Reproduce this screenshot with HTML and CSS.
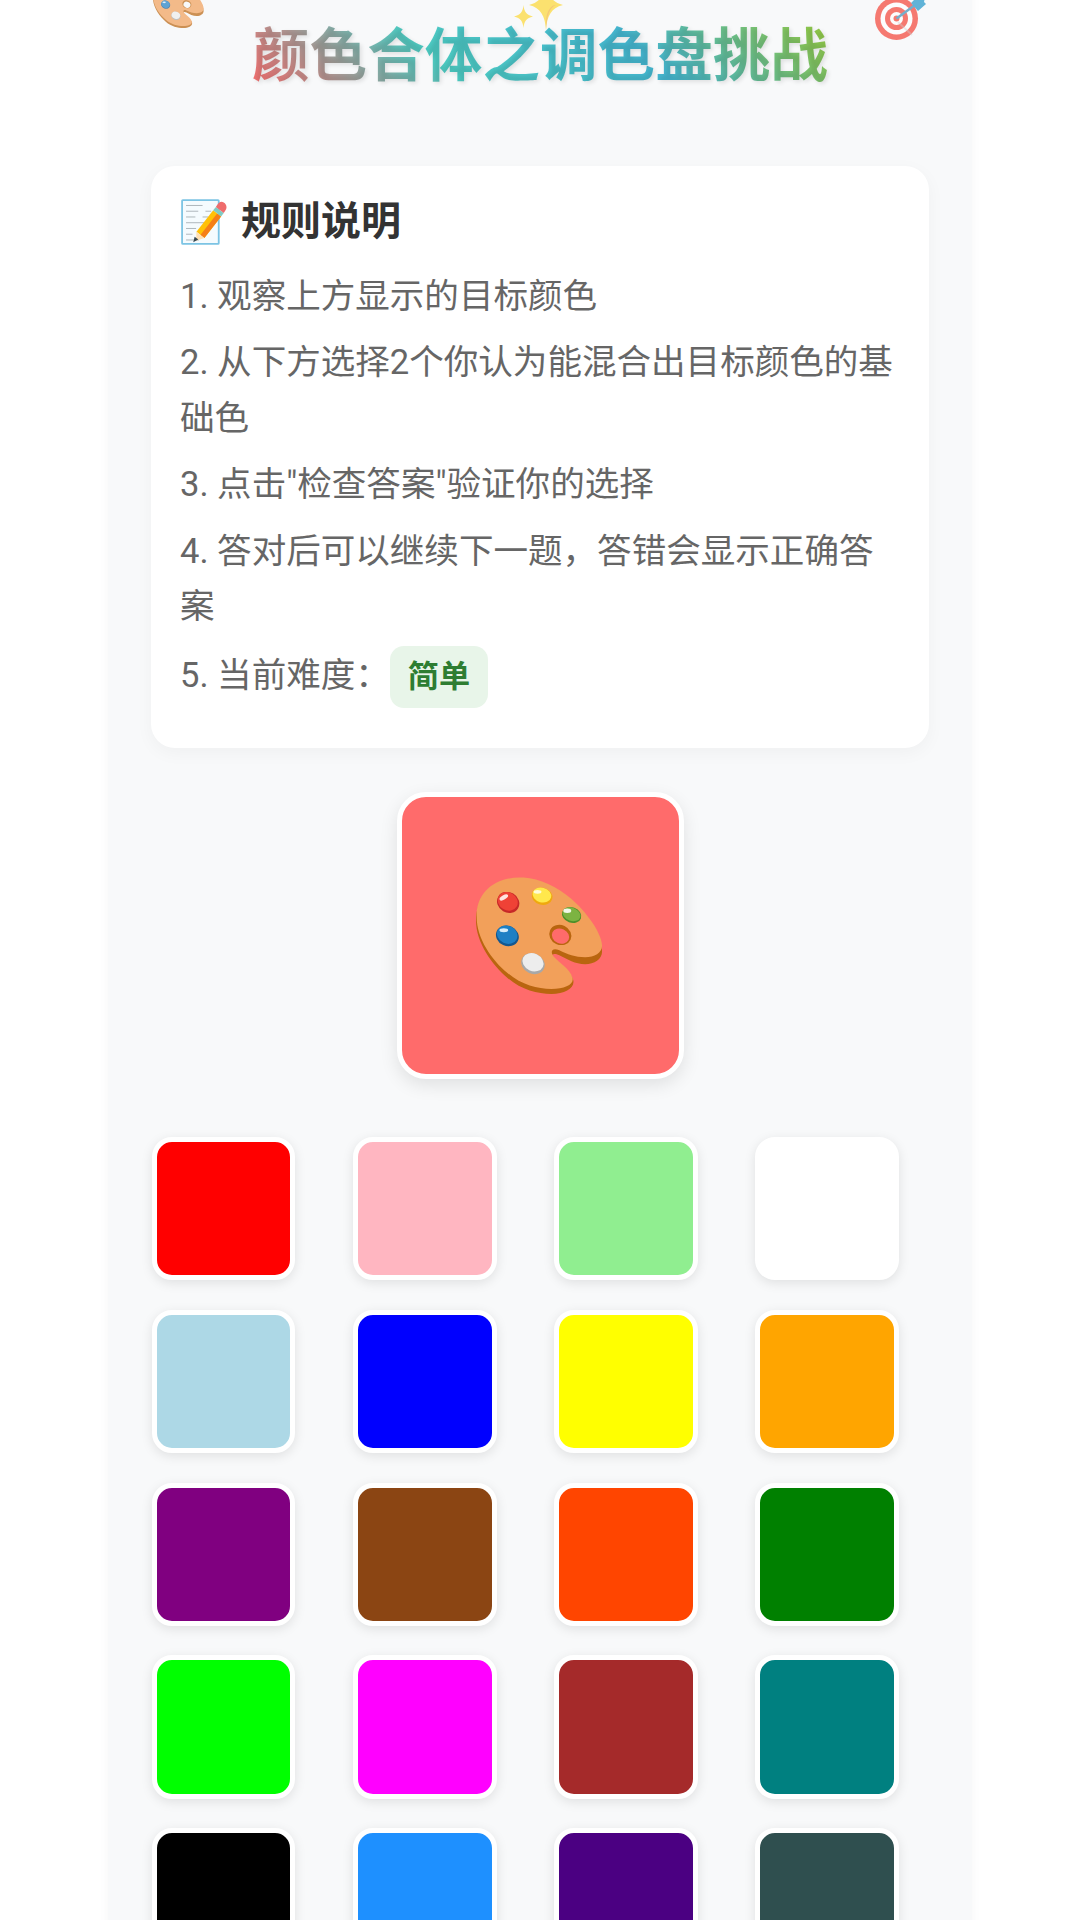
FILE: index.html
```html
<!DOCTYPE html>
<html lang="zh-CN">
<head>
<meta charset="utf-8">
<title>颜色合体之调色盘挑战</title>
<link rel="stylesheet" href="styles.css">
</head>
<body>
<main class="panel">
  <header class="hero">
    <h1 class="title">颜色合体之调色盘挑战</h1>
    <svg class="deco deco-palette" viewBox="0 0 64 59"><use href="#palette"/></svg>
    <svg class="deco deco-sparkle" viewBox="0 0 56 56"><use href="#sparkle"/></svg>
    <svg class="deco deco-target" viewBox="0 0 56 56"><use href="#target"/></svg>
  </header>

  <section class="rules">
    <h2 class="rules-title"><svg class="memo" viewBox="0 0 64 64"><use href="#memo"/></svg>规则说明</h2>
    <p class="rule">1. 观察上方显示的目标颜色</p>
    <p class="rule">2. 从下方选择2个你认为能混合出目标颜色的基础色</p>
    <p class="rule">3. 点击"检查答案"验证你的选择</p>
    <p class="rule">4. 答对后可以继续下一题，答错会显示正确答案</p>
    <p class="rule">5. 当前难度：<span class="badge">简单</span></p>
  </section>

  <div class="target-box"><svg class="target-icon" viewBox="0 0 64 59"><use href="#palette"/></svg></div>

  <div class="swatches">
    <div class="swatch c-red"></div><div class="swatch c-pink"></div><div class="swatch c-lgreen"></div><div class="swatch c-white"></div>
    <div class="swatch c-lblue"></div><div class="swatch c-blue"></div><div class="swatch c-yellow"></div><div class="swatch c-orange"></div>
    <div class="swatch c-purple"></div><div class="swatch c-saddle"></div><div class="swatch c-orangered"></div><div class="swatch c-green"></div>
    <div class="swatch c-lime"></div><div class="swatch c-magenta"></div><div class="swatch c-brown"></div><div class="swatch c-teal"></div>
    <div class="swatch c-black"></div><div class="swatch c-dodger"></div><div class="swatch c-indigo"></div><div class="swatch c-slate"></div>
  </div>
</main>

<svg class="defs" width="0" height="0" aria-hidden="true">
  <defs>
    <symbol id="palette" viewBox="0 0 64 59">
      <path fill="#B9650F" d="M24 1.300C10 .5 0 9 0 22c0 11 8 22 16 29 7 6 15 8 22 8 7 0 12-3 11-7-1-4-7-7-10-10-2-3 0-4 3-2.500 4 2 8 4.500 13 4.500s9-3 8.500-7C63 29 56 19 48 12 41 6 32 1.800 24 1.300z"/>
      <path fill="#F2A05A" d="M24 .3C10-.5 0 7.500 .3 20c0 11 7.700 22 15.700 28.500 7 6 15 8 22 8 7 0 12-2.500 10.500-6-1-4-6.500-7-9.500-10.500-2-3 0-4.500 3-3 4 2 8 3.500 13 3.500s9-2.500 8.500-6.500C63 28 56 18 48 11 41 5 32 .8 24 .3z"/>
      <ellipse cx="42.500" cy="29.200" rx="5.700" ry="5" transform="rotate(25 42.500 29.200)" fill="#B9650F"/>
      <ellipse cx="42.600" cy="29.800" rx="4.500" ry="3.700" transform="rotate(25 42.600 29.800)" fill="var(--hole,#ff6b6b)"/>
      <ellipse cx="16.200" cy="12.800" rx="5.800" ry="5.100" transform="rotate(30 16.200 12.800)" fill="#C62828"/>
      <ellipse cx="16" cy="12.300" rx="5.200" ry="4.500" transform="rotate(30 16 12.300)" fill="#EF4236"/>
      <ellipse cx="14" cy="10.300" rx="2.400" ry="1.100" transform="rotate(-30 14 10.300)" fill="#FFE4E0"/>
      <ellipse cx="33.300" cy="9.700" rx="5.300" ry="4.300" transform="rotate(15 33.300 9.700)" fill="#EFA90E"/>
      <ellipse cx="33.200" cy="9.100" rx="4.800" ry="3.700" transform="rotate(15 33.200 9.100)" fill="#FFE84C"/>
      <ellipse cx="31" cy="7.500" rx="2" ry="1" fill="#FFFBD6"/>
      <ellipse cx="48.200" cy="19.200" rx="5" ry="3.900" transform="rotate(20 48.200 19.200)" fill="#4E8F2A"/>
      <ellipse cx="48.200" cy="18.800" rx="4.600" ry="3.300" transform="rotate(20 48.200 18.800)" fill="#7CB342"/>
      <ellipse cx="46" cy="17" rx="2" ry="1.100" fill="#F1F8E9"/>
      <ellipse cx="15.800" cy="29.700" rx="5.900" ry="5.100" transform="rotate(25 15.800 29.700)" fill="#14578F"/>
      <ellipse cx="15.700" cy="29.100" rx="5.300" ry="4.500" transform="rotate(25 15.700 29.100)" fill="#1E7FC4"/>
      <ellipse cx="14" cy="26.800" rx="2.200" ry="1" fill="#D5ECFA"/>
      <ellipse cx="28.700" cy="43.700" rx="6.100" ry="5.100" transform="rotate(25 28.700 43.700)" fill="#A8A8A8"/>
      <ellipse cx="28.700" cy="43" rx="5.500" ry="4.400" transform="rotate(25 28.700 43)" fill="#EDEDED"/>
    </symbol>
    <symbol id="sparkle" viewBox="0 0 56 56">
      <path fill="#FDD835" d="M34 3c1 14 5 22 17 25-12 3-16 11-17 25-1-14-5-22-17-25C29 25 33 17 34 3z"/>
      <path fill="#F4B53F" d="M34 53c-.5-14 1-20 7-24.500l3-.5C37 31 35 39 34 53z"/>
      <path fill="#FDD835" d="M11.500 28c.7 7 3 10 9.500 11.500-6.500 1.500-8.800 4.500-9.500 11.500-.7-7-3-10-9.500-11.500C8.500 38 10.800 35 11.500 28z"/>
    </symbol>
    <symbol id="target" viewBox="0 0 56 56">
      <circle cx="24.500" cy="28.500" r="21.500" fill="#F44336"/>
      <circle cx="24.500" cy="28.500" r="16" fill="#FFF"/>
      <circle cx="24.500" cy="28.500" r="11.500" fill="#F44336"/>
      <circle cx="24.500" cy="28.500" r="6.500" fill="#FFF"/>
      <circle cx="24.500" cy="28.500" r="3" fill="#F44336"/>
      <path d="M26 32 40 45" stroke="#BDBDBD" stroke-width="2" opacity=".4"/>
      <path d="M24.500 28.500 43 15" stroke="#3E8FB8" stroke-width="2.500"/>
      <path fill="#2196C9" d="M39 13l9-9 5 3-1 5 2 2-8 7z"/>
    </symbol>
    <symbol id="memo" viewBox="0 0 64 64">
      <rect x="1.500" y="1.500" width="51" height="61" rx="1" fill="#F5FBFE" stroke="#7CC4E4" stroke-width="2.500"/>
      <g stroke="#A9B2B7" stroke-width="1.300" fill="none">
        <path d="M7 9h23M7 17h17M7 25h13M7 33h26M7 41h14M7 49h9M7 57h18M34 17h8M30 25h8"/>
      </g>
      <path fill="#FFC107" d="M21.500 45.700 32.500 54.300 55.800 24.400 44.800 15.800z"/>
      <path fill="#F57F17" d="M27 50 32.500 54.300 55.800 24.400 50.300 20.100z"/>
      <path fill="#FFE0B2" d="M21.500 45.700 32.500 54.300 21 58z"/>
      <path fill="#37474F" d="M19 52.500 24 56.500 17 60z"/>
      <path fill="#80CBC4" d="M44.800 15.800 55.800 24.400 59.500 19.600 48.500 11z"/>
      <path fill="#EF6C6C" d="M48.500 11 59.500 19.600 61.500 16.500C65 12 63 7 59.500 5 56 2.500 53 4.500 50.500 8z"/>
    </symbol>
  </defs>
</svg>
</body>
</html>
```
FILE: styles.css
```css
* { box-sizing: border-box; }
html, body { margin: 0; padding: 0; }
body {
  width: 1080px;
  height: 1920px;
  overflow: hidden;
  background: #fff;
  font-family: Roboto, "Noto Sans CJK SC", sans-serif;
}
.panel {
  width: 864px;
  height: 2000px;
  margin: -40px auto 0;
  padding: 40px 43.200px 0;
  background: #f8f9fa;
  box-shadow: 0 0 10px rgba(0, 0, 0, 0.04);
}
.hero {
  position: relative;
  height: 166px;
  padding-top: 21px;
  text-align: center;
}
.title {
  display: inline-block;
  margin: 0;
  font-size: 57.6px;
  line-height: 72px;
  font-weight: 700;
  background: linear-gradient(45deg, #ff6b6b, #4ecdc4, #45b7d1, #96c93d);
  -webkit-background-clip: text;
  background-clip: text;
  color: transparent;
  text-shadow: 2px 2px 4px rgba(0, 0, 0, 0.1);
}
.deco { position: absolute; opacity: 0.7; --hole: #f8f9fa; }
.deco-palette { left: 2px; top: -19px; width: 51px; height: 47px; }
.deco-sparkle { left: 361px; top: -23px; width: 56px; height: 56px; }
.deco-target { left: 721px; top: -10px; width: 56px; height: 56px; }

.rules {
  padding: 29.800px 28.800px 28.800px;
  background: #fff;
  border-radius: 24px;
  box-shadow: 0 5px 18px rgba(0, 0, 0, 0.04);
}
.rules-title {
  display: flex;
  align-items: center;
  margin: 0 0 21px;
  font-size: 40px;
  line-height: 52px;
  font-weight: 700;
  color: #333;
}
.memo { width: 46px; height: 46px; margin: 0 14px 0 1px; }
.rule {
  margin: 0 0 11.400px;
  font-size: 34.560px;
  line-height: 55.300px;
  color: #666;
}
.badge {
  display: inline-block;
  padding: 6px 18px;
  font-size: 31.100px;
  line-height: 50px;
  border-radius: 14px;
  background: #e8f5e9;
  color: #2e7d32;
  font-weight: 700;
}
.target-box {
  display: flex;
  align-items: center;
  justify-content: center;
  width: 287px;
  height: 287px;
  margin: 44px auto 0;
  background: #ff6b6b;
  border: 5px solid #fff;
  border-radius: 29px;
  box-shadow: 0 6px 18px rgba(0, 0, 0, 0.1);
}
.target-icon { width: 127px; height: 117px; margin-left: -2px; }
.swatches {
  display: grid;
  grid-template-columns: repeat(4, 172.400px);
  grid-auto-rows: 143.500px;
  gap: 29.300px 28.800px;
  margin: 57.600px 0 0 0.700px;
}
.swatch {
  width: 143.500px;
  height: 143.500px;
  border: 5px solid #fff;
  border-radius: 20px;
  box-shadow: 0 3px 12px rgba(0, 0, 0, 0.1);
}
.defs { position: absolute; }
.c-red { background: #f00; }
.c-pink { background: #ffb6c1; }
.c-lgreen { background: #90ee90; }
.c-white { background: #fff; }
.c-lblue { background: #add8e6; }
.c-blue { background: #00f; }
.c-yellow { background: #ff0; }
.c-orange { background: #ffa500; }
.c-purple { background: #800080; }
.c-saddle { background: #8b4513; }
.c-orangered { background: #ff4500; }
.c-green { background: #008000; }
.c-lime { background: #0f0; }
.c-magenta { background: #f0f; }
.c-brown { background: #a52a2a; }
.c-teal { background: #008080; }
.c-black { background: #000; }
.c-dodger { background: #1e90ff; }
.c-indigo { background: #4b0082; }
.c-slate { background: #2f4f4f; }
```
